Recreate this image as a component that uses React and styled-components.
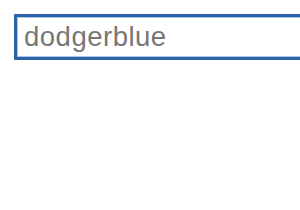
import React from "react";
import styled, { createGlobalStyle } from "styled-components";

const GlobalStyle = createGlobalStyle`
  html, body {
    margin: 0;
    padding: 0;
    background: #ffffff;
    overflow: hidden;
  }
`;

const Page = styled.div`
  width: 300px;
  height: 210px;
  padding: 14px 0 0 14px;
  box-sizing: border-box;
  overflow: hidden;
`;

const ColorInput = styled.input`
  display: block;
  width: 320px;
  height: 46px;
  box-sizing: border-box;
  margin: 0;
  padding: 0 7px;
  border: 3px solid #2c62a6;
  box-shadow: inset 0 0 0 1px #a9c7ea;
  border-radius: 1px;
  background: #ffffff;
  font-family: "Liberation Sans", Arial, sans-serif;
  font-size: 27.5px;
  letter-spacing: 0.5px;
  color: #777777;
  outline: none;
`;

const App = () => (
  <Page>
    <GlobalStyle />
    <ColorInput type="text" defaultValue="dodgerblue" />
  </Page>
);

export default App;
